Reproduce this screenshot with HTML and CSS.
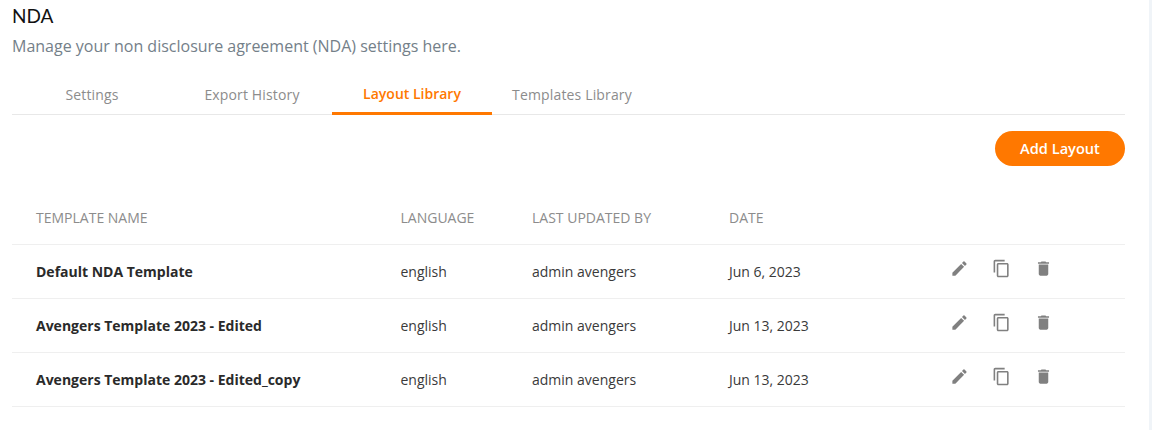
FILE: index.html
```html
<!DOCTYPE html>
<html lang="en">
<head>
<meta charset="utf-8">
<title>NDA</title>
<link rel="stylesheet" href="styles.css">
</head>
<body>
<svg class="sprite" aria-hidden="true">
  <symbol id="edit" viewBox="0 0 24 24"><path d="M3 17.25V21h3.75L17.81 9.94l-3.75-3.75L3 17.25zM20.71 7.04a1 1 0 0 0 0-1.41l-2.34-2.34a1 1 0 0 0-1.41 0l-1.83 1.83 3.75 3.75 1.83-1.83z"/></symbol>
  <symbol id="copy" viewBox="0 0 24 24"><path d="M16 1H4c-1.1 0-2 .9-2 2v14h2V3h12V1zm3 4H8c-1.1 0-2 .9-2 2v14c0 1.1.9 2 2 2h11c1.1 0 2-.9 2-2V7c0-1.1-.9-2-2-2zm0 16H8V7h11v14z"/></symbol>
  <symbol id="delete" viewBox="0 0 24 24"><path d="M6 19c0 1.1.9 2 2 2h8c1.1 0 2-.9 2-2V7H6v12zM19 4h-3.5l-1-1h-5l-1 1H5v2h14V4z"/></symbol>
</svg>
<main class="page">
  <h1 class="title">NDA</h1>
  <p class="subtitle">Manage your non disclosure agreement (NDA) settings here.</p>
  <nav class="tabs">
    <a class="tab"><span>Settings</span></a>
    <a class="tab"><span>Export History</span></a>
    <a class="tab tab-active"><span>Layout Library</span></a>
    <a class="tab"><span>Templates Library</span></a>
  </nav>
  <div class="toolbar"><button class="add">Add Layout</button></div>
  <section class="table">
    <div class="row head"><span>TEMPLATE NAME</span><span>LANGUAGE</span><span>LAST UPDATED BY</span><span>DATE</span><span></span></div>
    <div class="row"><span class="name">Default NDA Template</span><span>english</span><span>admin avengers</span><span>Jun 6, 2023</span><span class="actions"><svg><use href="#edit"/></svg><svg><use href="#copy"/></svg><svg><use href="#delete"/></svg></span></div>
    <div class="row"><span class="name">Avengers Template 2023 - Edited</span><span>english</span><span>admin avengers</span><span>Jun 13, 2023</span><span class="actions"><svg><use href="#edit"/></svg><svg><use href="#copy"/></svg><svg><use href="#delete"/></svg></span></div>
    <div class="row"><span class="name">Avengers Template 2023 - Edited_copy</span><span>english</span><span>admin avengers</span><span>Jun 13, 2023</span><span class="actions"><svg><use href="#edit"/></svg><svg><use href="#copy"/></svg><svg><use href="#delete"/></svg></span></div>
  </section>
</main>
</body>
</html>
```

FILE: styles.css
```css
* { box-sizing: border-box; }
body { margin: 0; height: 430px; overflow: hidden; background: #fff; color: #3a3a3a; font: 14px/20px "Open Sans", sans-serif; }
.sprite { display: none; }
.page { height: 430px; padding: 4px 24px 0 12px; border-right: 3px solid #f0f4f8; }
.title { margin: 0; color: #111; font: 400 19px/24px Lato, sans-serif; }
.subtitle { margin: 7px 0 0; color: #748089; font-size: 16px; line-height: 22px; }
.tabs { display: flex; height: 40px; margin-top: 18px; border-bottom: 1px solid #e8e8e8; }
.tab { width: 160px; height: 40px; padding-top: 10px; color: #8c8c8c; text-align: center; white-space: nowrap; letter-spacing: .15px; }
.tab-active { padding-top: 9px; color: #ff7800; font-weight: 600; letter-spacing: 0; border-bottom: 3px solid #ff7800; }
.toolbar { display: flex; justify-content: flex-end; padding-top: 16px; }
.add { width: 130px; height: 35px; padding: 0 0 2px; border: 0; border-radius: 18px; background: #ff7800; color: #fff; font: 600 14.6px/20px "Open Sans", sans-serif; }
.table { margin-top: 25px; }
.row { display: grid; grid-template-columns: 364.5px 131.5px 197px 220.5px 1fr; align-items: center; height: 54px; padding-left: 24px; border-bottom: 1px solid #efefef; white-space: nowrap; }
.head { color: #8c8c8c; }
.name { color: #2a2a2a; font-weight: 700; }
.actions { display: flex; gap: 23px; margin-top: -6px; }
.actions svg { width: 19px; height: 19px; fill: #808080; }
```
